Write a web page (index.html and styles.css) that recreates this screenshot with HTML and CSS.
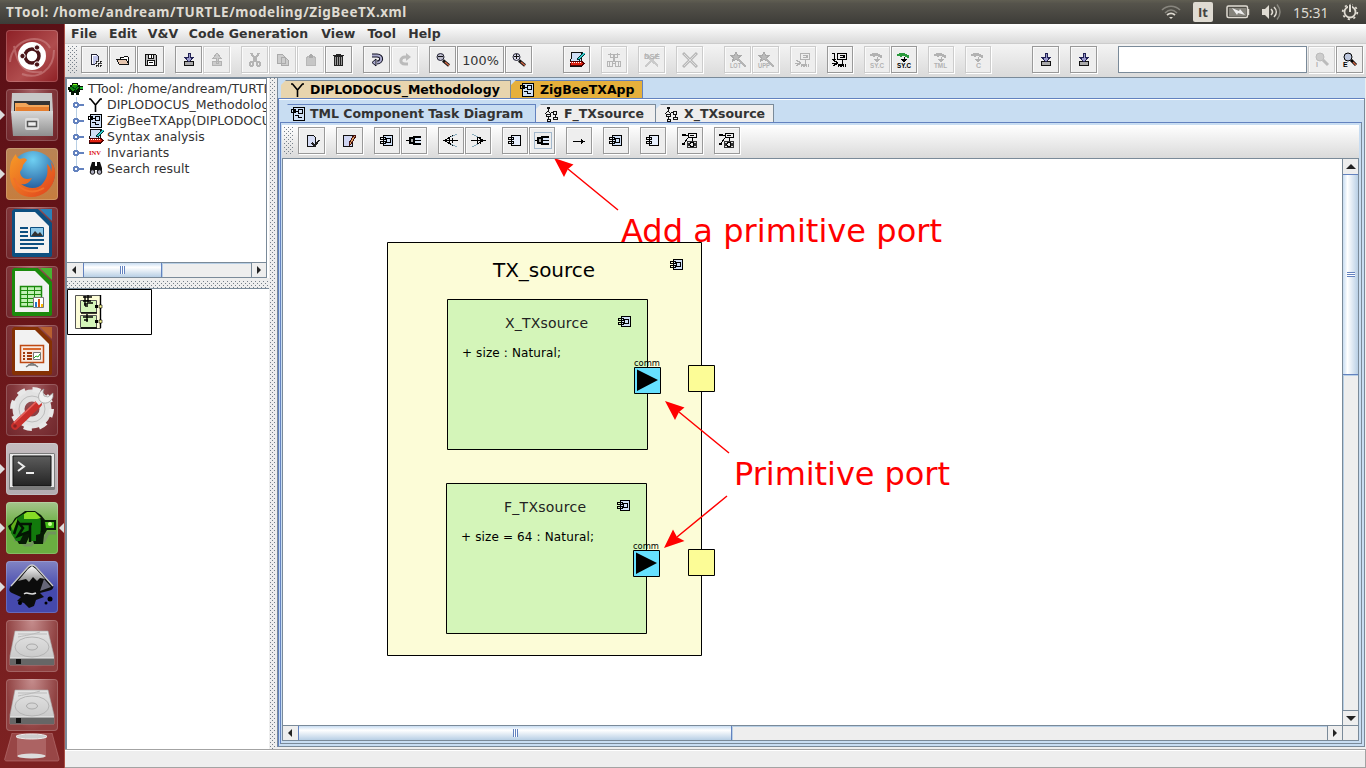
FILE: index.html
```html
<!DOCTYPE html>
<html lang="en">
<head>
<meta charset="utf-8">
<title>TTool</title>
<link rel="stylesheet" href="styles.css">
</head>
<body>
<svg class="defs" width="0" height="0">
<defs>
<linearGradient id="steel" x1="0" y1="0" x2="0" y2="1"><stop offset="0" stop-color="#d8d8d8"/><stop offset="1" stop-color="#8f8f8f"/></linearGradient>
<linearGradient id="disk" x1="0" y1="0" x2="0" y2="1"><stop offset="0" stop-color="#e4e4e4"/><stop offset="1" stop-color="#c3c3c3"/></linearGradient>
<linearGradient id="term" x1="0" y1="0" x2="0" y2="1"><stop offset="0" stop-color="#5c5c5c"/><stop offset="1" stop-color="#242424"/></linearGradient>
<linearGradient id="fox" x1="0" y1="0" x2="1" y2="1"><stop offset="0" stop-color="#f79b27"/><stop offset="1" stop-color="#df401d"/></linearGradient>
<radialGradient id="globe" cx=".5" cy=".2" r=".8"><stop offset="0" stop-color="#6fd0f2"/><stop offset="1" stop-color="#17478e"/></radialGradient>
<linearGradient id="ink" x1="0" y1="0" x2="0" y2="1"><stop offset="0" stop-color="#fff"/><stop offset="1" stop-color="#888"/></linearGradient>
<symbol id="new" viewBox="0 0 16 16"><path d="M4.500 2.500h5l2 2v8h-7z" fill="#bfc4ea" stroke="#223"/><path d="M5.500 12V3.500H9" fill="none" stroke="#fff"/><path d="M11.500 8v8M8 11.500h8" stroke="#eee" stroke-width="3"/><path d="M11.500 8v2M11.500 13v2M8 11.500h2M13 11.500h2M9 9h1v1H9zM13 9h1v1h-1zM9 13h1v1H9zM13 13h1v1h-1zM11 11h1v1h-1z" stroke="#111" stroke-width=".8"/></symbol>
<symbol id="open" viewBox="0 0 16 16"><path d="M5.500 7V5.500h3l1-1h3l1 1v7h-1" fill="#fff" stroke="#111"/><path d="M1.500 7.500h10l2 5h-9z" fill="#e5c5ae" stroke="#111"/></symbol>
<symbol id="save" viewBox="0 0 16 16"><path d="M2.500 2.500h10l1 1v10h-11z" fill="#bbb" stroke="#111"/><path d="M5.500 2.500h5v4h-5zM4.500 8.500h7v5h-7z" fill="#fff" stroke="#111"/><path d="M8.500 3v3M6 10.500h4" stroke="#111"/></symbol>
<symbol id="import" viewBox="0 0 16 16"><path d="M3.500 9.500h9v4h-9z" fill="#aaa" stroke="#111"/><path d="M7 1.500h2v4h3L8 10 4 5.500h3z" fill="#99c" stroke="#225"/></symbol>
<symbol id="export" viewBox="0 0 16 16"><path d="M3.500 9.500h9v4h-9zM7 11V6H4l4-5 4 5H9v5z" fill="#ccc" stroke="#b2b2b2"/></symbol>
<symbol id="cut" viewBox="0 0 16 16"><path d="M4 1l6 9M12 1L6 10" stroke="#b4b4b4" stroke-width="2"/><circle cx="4.500" cy="12" r="2" fill="none" stroke="#b4b4b4" stroke-width="2"/><circle cx="11.500" cy="12" r="2" fill="none" stroke="#b4b4b4" stroke-width="2"/></symbol>
<symbol id="copy" viewBox="0 0 16 16"><path d="M2.500 2.500h5l3 3v6h-8zM6.500 5.500h4l3 3v5h-7z" fill="#ccc" stroke="#aaa"/></symbol>
<symbol id="paste" viewBox="0 0 16 16"><path d="M3.500 5.500l2-1h5l2 1v8h-9z" fill="#c6c6c6" stroke="#b8b8b8"/><path d="M6 4l2-3 2 3v2H6z" fill="#aaa"/></symbol>
<symbol id="trash" viewBox="0 0 16 16"><path d="M3.500 4.500h8v9h-8z" fill="#999" stroke="#222"/><path d="M2 3.500h11M5 2.500h5M5.500 5v9M7.500 5v9M9.500 5v9" stroke="#222"/></symbol>
<symbol id="undo" viewBox="0 0 16 16"><path d="M3 3.500h5c6 0 5 7 0 7" fill="none" stroke="#112" stroke-width="4"/><path d="M3 3.500h5c6 0 5 7 0 7" fill="none" stroke="#aac" stroke-width="2"/><path d="M3 10.500l4-3.500v7z" fill="#aac" stroke="#112"/></symbol>
<symbol id="redo" viewBox="0 0 16 16"><path d="M11 12H8C2 12 3 5 8 5h2" fill="none" stroke="#bbb" stroke-width="3"/><path d="M9 1l5 4-5 4z" fill="#bbb"/></symbol>
<symbol id="zout" viewBox="0 0 16 16"><path d="M8 8.500l6 5" stroke="#111" stroke-width="3"/><path d="M10 10l4 3.500" stroke="#c64" stroke-width="1.500"/><circle cx="5.500" cy="5" r="3.500" fill="#bbc" stroke="#223"/><path d="M3 4.500h5" stroke="#111"/></symbol>
<symbol id="zin" viewBox="0 0 16 16"><path d="M8 8.500l6 5" stroke="#111" stroke-width="3"/><path d="M10 10l4 3.500" stroke="#c64" stroke-width="1.500"/><circle cx="5.500" cy="5" r="3.500" fill="#dde" stroke="#223"/><path d="M3 4.500h5M5.500 2v5" stroke="#111"/></symbol>
<symbol id="syntax" viewBox="0 0 16 16"><path d="M2.500.500h10v14h-11z" fill="#cfdff5" stroke="#111"/><path d="M1 9.500h12l2 2-2 2H1z" fill="#d21" stroke="#500"/><path d="M1 10.500h12" stroke="#fff" stroke-dasharray="1 1"/><path d="M9 8l6-7" stroke="#033" stroke-width="3"/><path d="M10 7l5-6" stroke="#3cc" stroke-width="1.500"/></symbol>
<symbol id="model" viewBox="0 0 16 16"><path d="M2 2.500h12M4.500 1v5M11.500 1v5M4 5.500h8M8 2v8M1.500 9.500h5v5h-5zM9.500 9.500h5v5h-5zM6 11.500h4M3.500 10v4M12.500 10v4" fill="none" stroke="#b5b5b5" stroke-width="1.500"/></symbol>
<symbol id="cross" viewBox="0 0 16 16"><path d="M1 1l14 14M15 1L1 15" stroke="#b8b8b8" stroke-width="3"/><path d="M2 2l12 12M14 2L2 14" stroke="#dedede"/></symbol>
<symbol id="dse" viewBox="0 0 16 16"><path d="M1 2l13 12M14 2L1 15" stroke="#cacaca" stroke-width="2.500"/><text x="0" y="7" font-size="8" textLength="16" lengthAdjust="spacingAndGlyphs" class="px gray">DSE</text></symbol>
<symbol id="wand" viewBox="0 0 16 16"><path d="M6 0l1.500 3.500H11L8.500 6l1 3L6 7.500 2.500 9l1-3L1 3.500h3.500z" fill="#bbb" stroke="#aaa"/><path d="M8 7l8 8" stroke="#b4b4b4" stroke-width="2"/></symbol>
<symbol id="sim" viewBox="0 0 16 16"><path d="M5.500 1.500h9v6h-9zM8 3.500h4v2H8M10.500 8v5M1 8l5 3-5 3M0 11.500h6M6.500 15v-2h2v2M9.500 15v-2h2v2M13.500 15v-3" fill="none" stroke="currentColor" stroke-width="1.300"/></symbol>
<symbol id="code" viewBox="0 0 16 16"><path d="M1 4V2h2V1h6v1h2v1h2v3h-2V5H9V4H6v1H4V4z" fill="currentColor"/></symbol>
<symbol id="down" viewBox="0 0 16 16"><path d="M8 5v3M5.500 7.500h5L8 9.500z" fill="currentColor" stroke="currentColor"/></symbol>
<symbol id="turtle" viewBox="0 0 16 16"><path d="M0 6h2V4h2V2h6v2h2v1h3v4h-3v2h-1v3H8v-2H6v2H3v-3H1z" fill="#021402"/><path d="M2 6h2V4h6l1 3-3 2-4 1-2-2z" fill="#148a10"/><path d="M5 3h4v1H5z" fill="#8f2"/><path d="M12 6h3v2h-3z" fill="#2b3"/><path d="M4 6l3 2 3-3M7 8v3" stroke="#041" fill="none"/></symbol>
<symbol id="y" viewBox="0 0 16 16"><path d="M1 2h1.500L7.500 8l5-6H14M7.500 8v7" fill="none" stroke="#000" stroke-width="1.600"/></symbol>
<symbol id="design" viewBox="0 0 16 16"><path d="M2.500 1.500h11v13h-11z" fill="#cfe0f5" stroke="#000" stroke-width="1.400"/><path d="M7.500 3.500h4v4h-4zM0 3.500h3v3H0zM3 5.500h4M4.500 3v4M4 9.500h3v2h4" fill="none" stroke="#000"/></symbol>
<symbol id="act" viewBox="0 0 16 16"><path d="M3 1h3v2H3z" fill="#111"/><path d="M4.500 3v3M1 8l3-3 3 3M2.500 8.500h4v2h-4zM4.500 10v3M3 13h3v2H3zM7 6.500h3M9.500 5.500h3v3h-3zM11 9v2M9.500 11.500h4v2h-4z" fill="none" stroke="#111"/></symbol>
<symbol id="comp" viewBox="0 0 16 16"><path d="M4.500 2.500h9v10h-9z" fill="#cfdff5" stroke="#000"/><path d="M7.500 5.500h4v4h-4zM1.500 4.500h5v2h-5zM1.500 8.500h5v2h-5z" fill="none" stroke="#000"/></symbol>
<symbol id="prim" viewBox="0 0 16 16"><path d="M4.500 2.500h9v10h-9z" fill="#e6eefc" stroke="#000"/><path d="M1.500 4.500h5v2h-5zM1.500 8.500h5v2h-5z" fill="none" stroke="#000"/></symbol>
<symbol id="port" viewBox="0 0 16 16"><path d="M7 4h8v7H7z" fill="#dce8fa"/><path d="M7 4h8M7 11h8" stroke="#000" stroke-width="2"/><path d="M0 7.500h4M9 7.500h6" stroke="#000"/><path d="M4 5h4v5H4z" fill="#aaa" stroke="#000" stroke-width="2"/></symbol>
<symbol id="fork" viewBox="0 0 16 16"><path d="M0 7.500h15M2 7l9-5M2 8l9 5M6.500 4v7M9.500 5v5" fill="none" stroke="#000"/><path d="M14 1l-6 3M14 14l-6-3" stroke="#8ab"/></symbol>
<symbol id="join" viewBox="0 0 16 16"><path d="M1 7.500h15M13 7L4 2M13 8l-9 5M10.500 4v7M7.500 5v5" fill="none" stroke="#000"/><path d="M2 1l6 3M2 14l6-3" stroke="#8ab"/></symbol>
<symbol id="arrow" viewBox="0 0 16 16"><path d="M2 8.500h11" stroke="#000"/><path d="M10 6l4 2.500-4 2.500z"/></symbol>
<symbol id="cam" viewBox="0 0 16 16"><path d="M0 1h4v2H0zM0 10h3v2H0z"/><path d="M6.500.500h8v4h-8zM8 2.500h4M3 2.500h3M2 10l4-5M10.500 5v4" fill="none" stroke="#000"/><path d="M5 8h10v7H5z" fill="#333"/><circle cx="10" cy="11.500" r="2" fill="#eee" stroke="#000"/><path d="M6 9h2v1H6zM12 9h2v1h-2zM6 13h2v1H6zM12 13h2v1h-2z" fill="#ddd"/></symbol>
<symbol id="page" viewBox="0 0 16 16"><path d="M3.500 2.500h6l2 2v9h-8z" fill="#d5dcf5" stroke="#111"/><path d="M8 10l3 3 4-6" fill="none" stroke="#222" stroke-width="1.500"/></symbol>
<symbol id="note" viewBox="0 0 16 16"><path d="M1.500 2.500h9v11h-9z" fill="#cfd5f2" stroke="#111"/><path d="M7 10l5-8 2 1-5 8-2 2z" fill="#e0a060" stroke="#411"/></symbol>
<symbol id="find" viewBox="0 0 16 16"><path d="M9 8l5 5" stroke="currentColor" stroke-width="3"/><circle cx="6" cy="5" r="4" fill="#bcc6dd" stroke="currentColor"/></symbol>
<symbol id="findoff" viewBox="0 0 16 16"><path d="M9 8l5 5" stroke="#bbb" stroke-width="3"/><circle cx="6" cy="5" r="4" fill="#ccc" stroke="#bbb"/></symbol>
<symbol id="glasses" viewBox="0 0 16 16"><path d="M4 1h3v4h2V1h3l2 6v5H9V9H7v3H2V7z" fill="#111"/><circle cx="4.500" cy="11" r="2.300" fill="#aab" stroke="#111"/><circle cx="11.500" cy="11" r="2.300" fill="#aab" stroke="#111"/></symbol>
<symbol id="hdd" viewBox="0 0 52 52"><path d="M9 11h33l6 25v9H4v-9z" fill="url(#disk)" stroke="#aaa" stroke-width=".6"/><path d="M4 38h44v7H4z" fill="#666"/><path d="M10 39h5v5h-5z" fill="#111"/><path d="M4 38h44" stroke="#eee"/><ellipse cx="26" cy="27" rx="17" ry="10" fill="none" stroke="#b4b4b4"/><ellipse cx="26" cy="27" rx="5.500" ry="3" fill="none" stroke="#aaa"/><path d="M12 14h29M12 17c10-2 12-2 22-5" fill="none" stroke="#bbb"/></symbol>
</defs>
</svg>

<header class="panel">
  <div class="panel-title">TTool: /home/andream/TURTLE/modeling/ZigBeeTX.xml</div>
  <div class="indicators">
    <svg width="20" height="16" viewBox="0 0 20 16"><path d="M1 6c5-5 13-5 18 0M4 9c4-4 8-4 12 0" fill="none" stroke="#88867e" stroke-width="1.600"/><path d="M6 11c3-2.500 5-2.500 8 0" fill="none" stroke="#dfdbd2" stroke-width="1.800"/><path d="M8 13h4l-2 2z" fill="#dfdbd2"/></svg>
    <span class="kbd">It</span>
    <svg width="24" height="14" viewBox="0 0 24 14"><rect x="1" y="1" width="20.500" height="11.500" rx="1.500" fill="none" stroke="#dfdbd2" stroke-width="1.500"/><path d="M3 3h17v8H3z" fill="#85837b"/><path d="M6 3l7 3 1-2 5 6-7-2-1 2z" fill="#eee"/><path d="M22.500 4v6" stroke="#dfdbd2" stroke-width="1.500"/></svg>
    <svg class="vol" width="20" height="18" viewBox="0 0 20 18"><path d="M1 6h3l4-4v14l-4-4H1z" fill="#dfdbd2"/><path d="M10 6c2 2 2 4 0 6M13 4c3 3 3 7 0 10" fill="none" stroke="#dfdbd2" stroke-width="1.600"/><path d="M16 1.500c4 5 4 10 0 15" fill="none" stroke="#88867e" stroke-width="1.500"/></svg>
    <span class="clock">15:31</span>
    <svg width="18" height="18" viewBox="0 0 18 18"><circle cx="9" cy="9" r="5.500" fill="none" stroke="#dfdbd2" stroke-width="1.800"/><circle cx="9" cy="9" r="7.300" fill="none" stroke="#dfdbd2" stroke-width="1.800" stroke-dasharray="2.200 3.530"/><path d="M9 1v8" stroke="#46453f" stroke-width="4"/><path d="M9 1.500v7.500" stroke="#dfdbd2" stroke-width="2"/></svg>
  </div>
</header>

<div class="desktop">
<nav class="launcher">
  <div class="tile dash"><svg viewBox="0 0 52 52"><path d="M4 32C6 8 36 2 44 18M48 20c0 20-16 30-32 24M8 16c4 22 12 28 28 26" fill="none" stroke="#d08c8c" stroke-opacity=".55" stroke-width="2"/><circle cx="26" cy="26" r="14" fill="#fff"/><circle cx="26" cy="26" r="7" fill="none" stroke="#4a1418" stroke-width="3.500"/><g fill="#4a1418" stroke="#fff"><circle cx="16.500" cy="26" r="2.700"/><circle cx="31" cy="17.500" r="2.700"/><circle cx="31" cy="34.500" r="2.700"/></g></svg></div>
  <div class="tile run"><svg viewBox="0 0 52 52"><path d="M6 4h40l1 20H5z" fill="#c8c8c8"/><path d="M8 12h36v12H8z" fill="#333"/><path d="M9 14h11l3 2h20v6H9z" fill="#f2a65a"/><path d="M10 18h33v4H10z" fill="#e57e2e"/><path d="M5 22h42v25H7z" fill="url(#steel)"/><rect x="19" y="29" width="14" height="12" rx="2" fill="#ddd"/><path d="M21.500 32.500h9v5h-9z" fill="#eee" stroke="#555" stroke-width="1.500"/></svg></div>
  <div class="tile run orange"><svg viewBox="0 0 52 52"><circle cx="27" cy="25" r="22" fill="url(#globe)"/><path d="M5 14c2-4 3-6 5-8 0 3 2 4 4 5 3-1 6-1 7 1l-4 5c0 3-2 5-3 7 1 7 6 8 12 6-3 6-8 7-11 6 8 6 18 5 22-1 5-6 5-12 4-19 3 2 4 5 4 8 1-4 1-8-1-11 4 4 6 9 5 15-2 13-12 21-24 21C10 49 0 35 5 14z" fill="url(#fox)"/><path d="M8 30c4 11 16 18 30 10" fill="none" stroke="#f0702a" stroke-width="2"/></svg></div>
  <div class="tile"><svg viewBox="0 0 52 52"><path d="M8 2h24l14 14v32c0 1-1 2-2 2H8c-1 0-2-1-2-2V4z" fill="#0d4f80"/><path d="M34 2h12v12z" fill="#2c82b8"/><path d="M9 5h20l14 14v27H9z" fill="#f2f2f2"/><path d="M14 21h8M14 25h8M14 29h8M14 33h24M14 37h24M14 41h18" stroke="#0d4f80" stroke-width="2"/><path d="M24.500 20.500h13v9h-13z" fill="#8cc8e8" stroke="#0d4f80"/><path d="M25 29l4-5 3 3 2-2 3 4z" fill="#333"/></svg></div>
  <div class="tile"><svg viewBox="0 0 52 52"><path d="M8 2h24l14 14v32c0 1-1 2-2 2H8c-1 0-2-1-2-2V4z" fill="#1c8a0c"/><path d="M34 2h12v12z" fill="#49b332"/><path d="M9 5h20l14 14v27H9z" fill="#f2f2f2"/><path d="M14.500 20.500h21v20h-21z" fill="#c0f0b4" stroke="#1c8a0c" stroke-width="1.500"/><path d="M21.500 20v20M28.500 20v20M14 24.500h21M14 28.500h21M14 32.500h21M14 36.500h21" stroke="#1c8a0c"/><path d="M27.500 31.500h10v10h-10z" fill="#fff" stroke="#777"/><path d="M29 36h2v5h-2z" fill="#27c"/><path d="M32 33h2v8h-2z" fill="#d51"/><path d="M35 38h2v3h-2z" fill="#fb0"/></svg></div>
  <div class="tile"><svg viewBox="0 0 52 52"><path d="M8 2h24l14 14v32c0 1-1 2-2 2H8c-1 0-2-1-2-2V4z" fill="#853104"/><path d="M34 2h12v12z" fill="#b86030"/><path d="M9 5h20l14 14v27H9z" fill="#f2f2f2"/><path d="M14.500 20.500h23v17h-23z" fill="#f8e8de" stroke="#bf4a14" stroke-width="1.500"/><path d="M17 24h18" stroke="#d9692e" stroke-width="2"/><path d="M17 28h2M17 31h2M17 34h2M21 28h5M21 31h5M21 34h5" stroke="#a03a0c" stroke-width="2"/><path d="M27.500 27.500h7v7h-7z" fill="#fff" stroke="#777"/><path d="M28 33l2-2 2 1 2-3" stroke="#2a2" fill="none"/><path d="M26 38l-6 4M26 38l6 4M22 40h8" stroke="#777" stroke-width="1.500"/></svg></div>
  <div class="tile"><svg viewBox="0 0 52 52"><circle cx="26" cy="25" r="13.500" fill="none" stroke="#e2e2e2" stroke-width="12"/><circle cx="26" cy="25" r="19.500" fill="none" stroke="#e8e8e8" stroke-width="5" stroke-dasharray="8 7.300"/><circle cx="26" cy="25" r="13" fill="none" stroke="#bdbdbd"/><path d="M9 42l23-22" stroke="#c92f2b" stroke-width="7.500" stroke-linecap="round"/><path d="M8 39l23-22" stroke="#e4645e" stroke-width="1.500"/><path d="M31 19l6-5" stroke="#e4e4e4" stroke-width="6"/><path d="M38 5c-5 2-7 8-4 12 4 4 11 2 13-4V9l-5 4-4-1-1-4z" fill="#f0f0f0" stroke="#999" stroke-width=".7"/><circle cx="9" cy="42" r="1.800" fill="#822"/></svg></div>
  <div class="tile run silver"><svg viewBox="0 0 52 52"><rect x="3" y="10" width="46" height="37" rx="1.500" fill="#7b7b7b"/><path d="M4 11h44v33H4z" fill="#e8e8e8"/><path d="M7 13h38v30H7z" fill="url(#term)" stroke="#111"/><path d="M12 19l6 4.500-6 4.500M20 30h8" fill="none" stroke="#eee" stroke-width="2"/></svg></div>
  <div class="tile run active green"><svg viewBox="0 0 52 52"><path d="M8 38h6l5 5h6l3-4h10l4-8h8" stroke="#777" stroke-width="3" fill="none" opacity=".5"/><path d="M2 24l4-3 3-5 6-4 4-3h10l6 4 4 5h11v10h-9l-3 5-1 9h-9l-2-7h-3l-3 7h-7l-5-9-5-6z" fill="#071b05"/><path d="M5 25l6-9 6-4h12l8 8-3 12-4 1v6h-5l-2-9-6 3-3 6h-4l-5-8z" fill="#127a0c"/><path d="M5 24l6-8v4l-4 9z" fill="#62ae1b"/><path d="M18 12l3-2h8l6 6-4 1H18z" fill="#86dc25"/><path d="M8 32l4-12 5 6-5 8 13-5M24 22v18M14 22h12M36 18v12" fill="none" stroke="#031503" stroke-width="2.500"/><path d="M39 20h9v6h-8z" fill="#41bb16"/><circle cx="44" cy="22" r="2" fill="#cfff9a"/></svg></div>
  <div class="tile run blue"><svg viewBox="0 0 52 52"><path d="M26 4c2 0 4 1 5 3l15 16c3 3 1 6-4 7l-8 2 4 4-8 3-2 6-5 2-5-5-7-2 4-4-9-4c-4-2-3-5 0-8L21 7c1-2 3-3 5-3z" fill="#0c0c0c"/><path d="M22 8l4-3 4 3 9 10-5-1-3 3-4-4-4 5-3-3-8 2z" fill="url(#ink)"/><path d="M5 25L22 6q4-4 8 0l17 19" fill="none" stroke="#ccc" stroke-width="1.300"/><path d="M18 33c4-3 6 2 12-1" stroke="#ddd" stroke-width="1.500" fill="none"/><path d="M38 18l7 8-11 4z" fill="#667"/><circle cx="14" cy="42" r="2"/><circle cx="44" cy="38" r="2.500"/><circle cx="40" cy="42" r="1.500"/></svg></div>
  <div class="tile light"><svg viewBox="0 0 52 52"><use href="#hdd"/></svg></div>
  <div class="tile light"><svg viewBox="0 0 52 52"><use href="#hdd"/></svg></div>
  <svg class="bin" viewBox="0 0 56 29"><path d="M8 0h40l7 26c0 2-1 2-2 2H3c-2 0-3-1-2-3z" fill="#a85a5a" fill-opacity=".65" stroke="#bb7777" stroke-opacity=".6"/><path d="M13 4h29v20H13z" fill="#c08080" fill-opacity=".5"/><ellipse cx="27.500" cy="3.500" rx="15.500" ry="2.500" fill="#ccc" stroke="#eee"/><ellipse cx="27.500" cy="23" rx="14" ry="2.500" fill="#ddd"/></svg>
</nav>

<div class="app">
<div class="menubar"><span>File</span><span>Edit</span><span class="vv">V&amp;V</span><span class="cg">Code Generation</span><span>View</span><span>Tool</span><span>Help</span></div>
<div class="toolbar main-tools">
  <i class="grip"></i>
  <div class="grp first"><b class="btn"><svg><use href="#new"/></svg></b><b class="btn"><svg><use href="#open"/></svg></b><b class="btn"><svg><use href="#save"/></svg></b></div>
  <div class="grp"><b class="btn"><svg><use href="#import"/></svg></b><b class="btn off"><svg><use href="#export"/></svg></b></div>
  <div class="grp"><b class="btn off"><svg><use href="#cut"/></svg></b><b class="btn off"><svg><use href="#copy"/></svg></b><b class="btn off"><svg><use href="#paste"/></svg></b><b class="btn"><svg><use href="#trash"/></svg></b></div>
  <div class="grp"><b class="btn"><svg class="soft"><use href="#undo"/></svg></b><b class="btn off"><svg class="soft"><use href="#redo"/></svg></b></div>
  <div class="grp"><b class="btn"><svg class="soft"><use href="#zout"/></svg></b><b class="btn pct">100%</b><b class="btn"><svg class="soft"><use href="#zin"/></svg></b></div>
  <div class="grp wide"><b class="btn"><svg><use href="#syntax"/></svg></b></div>
  <div class="grp"><b class="btn off n"><svg><use href="#model"/></svg></b></div>
  <div class="grp"><b class="btn off"><svg><use href="#dse"/></svg></b></div>
  <div class="grp"><b class="btn off"><svg class="soft"><use href="#cross"/></svg></b></div>
  <div class="grp mid"><b class="btn off"><svg class="gray"><use href="#wand"/><text x="0" y="16" textLength="11" lengthAdjust="spacingAndGlyphs" class="px">LOT</text></svg></b><b class="btn off"><svg class="gray"><use href="#wand"/><text x="0" y="16" textLength="12" lengthAdjust="spacingAndGlyphs" class="px">UPP</text></svg></b></div>
  <div class="grp"><b class="btn off n"><svg class="gray"><use href="#sim"/></svg></b></div>
  <div class="grp"><b class="btn n"><svg><use href="#sim"/><path d="M0 1.500h2v6M0 7.500h4" fill="none" stroke="#000"/></svg></b></div>
  <div class="grp"><b class="btn off n"><svg class="gray"><use href="#code"/><use href="#down"/><text x="1" y="16" textLength="14" lengthAdjust="spacingAndGlyphs" class="px">SY.C</text></svg></b><b class="btn n"><svg><use class="leaf" href="#code"/><use href="#down"/><text x="1" y="16" textLength="14" lengthAdjust="spacingAndGlyphs" class="px">SY.C</text></svg></b></div>
  <div class="grp"><b class="btn off n"><svg class="gray"><use href="#code"/><use href="#down"/><text x="1" y="16" textLength="13" lengthAdjust="spacingAndGlyphs" class="px">TML</text></svg></b></div>
  <div class="grp"><b class="btn off n"><svg class="gray"><use href="#code"/><use href="#down"/><text x="6" y="16" class="px">C</text></svg></b></div>
  <div class="grp far"><b class="btn"><svg><use href="#import"/></svg></b></div>
  <div class="grp"><b class="btn"><svg><use href="#import"/></svg></b></div>
  <div class="grp search"><i class="field"></i><b class="btn off"><svg class="gray soft"><use href="#findoff"/><text x="2" y="15" class="px">I</text></svg></b><b class="btn"><svg class="soft"><use href="#find"/><path d="M11 10l3 3" stroke="#c64" stroke-width="1.500"/><text x="1" y="15" class="px">E</text></svg></b></div>
</div>

<div class="work">
  <aside class="side">
    <div class="tree">
      <div class="row root"><svg><use href="#turtle"/></svg><span>TTool: /home/andream/TURTL</span></div>
      <div class="row"><i class="knob"></i><svg class="soft"><use href="#y"/></svg><span>DIPLODOCUS_Methodolog</span></div>
      <div class="row"><i class="knob"></i><svg><use href="#design"/></svg><span>ZigBeeTXApp(DIPLODOCU</span></div>
      <div class="row"><i class="knob"></i><svg><use href="#syntax"/></svg><span>Syntax analysis</span></div>
      <div class="row"><i class="knob"></i><svg><text x="1" y="10" textLength="12" lengthAdjust="spacingAndGlyphs" class="inv">INV</text></svg><span>Invariants</span></div>
      <div class="row"><i class="knob"></i><svg class="soft"><use href="#glasses"/></svg><span>Search result</span></div>
    </div>
    <div class="hbar"><i class="end left"></i><i class="thumb small"></i><i class="track"></i><i class="end right"></i></div>
    <div class="hsplit"></div>
    <svg class="mini" viewBox="0 0 85 46"><path d="M.500.500h84v45H.500z" fill="#fff" stroke="#000"/><path d="M8.500 6.500h25v33h-25z" fill="#fcfcd7" stroke="#555"/><path d="M13.500 11.500h16v12h-16zM13.500 26.500h16v12h-16z" fill="#d4f5b9" stroke="#555"/><path d="M16 8h9M21 6v9M16 12h8M17 15h4M18 17h3M22 14h4M16 28h10M20 25v8M17 31h4M14 24h16M14 39h16M33.500 6v33M18 7v10" stroke="#000" stroke-width="1.400"/><path d="M28 16h3v3h-3zM28 31h3v3h-3z"/><path d="M32 16h3v3h-3zM32 31h3v3h-3z" fill="#fcfc96" stroke="#000" stroke-width=".6"/></svg>
  </aside>
  <div class="vsplit"></div>
  <main class="outer">
    <div class="tabs top"><div class="tab tan t1"><svg class="soft"><use href="#y"/></svg>DIPLODOCUS_Methodology</div><div class="tab gold t2"><svg><use href="#design"/></svg>ZigBeeTXApp</div></div>
    <div class="outer-body">
      <div class="tabs sub"><div class="tab sel s1"><svg><use href="#design"/></svg>TML Component Task Diagram</div><div class="tab s2"><svg><use href="#act"/></svg>F_TXsource</div><div class="tab s3"><svg><use href="#act"/></svg>X_TXsource</div></div>
      <div class="inner-body">
        <div class="toolbar draw-tools">
          <i class="grip"></i>
          <div class="grp first"><b class="btn"><svg><use href="#page"/></svg></b></div>
          <div class="grp"><b class="btn"><svg><use href="#note"/></svg></b></div>
          <div class="grp"><b class="btn n"><svg><use href="#comp"/></svg></b><b class="btn n"><svg><use href="#port"/></svg></b></div>
          <div class="grp"><b class="btn n"><svg><use href="#fork"/></svg></b><b class="btn n"><svg><use href="#join"/></svg></b></div>
          <div class="grp"><b class="btn n"><svg><use href="#prim"/></svg></b><b class="btn n focus"><svg><use href="#port"/></svg></b></div>
          <div class="grp"><b class="btn n"><svg><use href="#arrow"/></svg></b></div>
          <div class="grp"><b class="btn n"><svg><use href="#comp"/></svg></b></div>
          <div class="grp"><b class="btn n"><svg><use href="#prim"/></svg></b></div>
          <div class="grp"><b class="btn n"><svg><use href="#cam"/></svg></b></div>
          <div class="grp"><b class="btn n"><svg><use href="#cam"/></svg></b></div>
        </div>
        <div class="pane">
          <div class="view">
            <svg class="diagram" viewBox="283 159 1059 566">
              <path d="M387.500 242.500h314v413h-314z" fill="#fcfcd7" stroke="#000"/>
              <path d="M447.500 299.500h200v150h-200zM446.500 483.500h200v150h-200z" fill="#d4f5b9" stroke="#000"/>
              <text x="493" y="277" font-size="20" textLength="102">TX_source</text>
              <text x="505" y="328" font-size="14" textLength="83" class="thin">X_TXsource</text>
              <text x="504" y="512" font-size="14" textLength="82" class="thin">F_TXsource</text>
              <text x="462" y="357" font-size="12" textLength="99">+ size : Natural;</text>
              <text x="461" y="541" font-size="12" textLength="133">+ size = 64 : Natural;</text>
              <g shape-rendering="crispEdges">
              <use href="#comp" x="669" y="257" width="16" height="16"/>
              <use href="#comp" x="617" y="314" width="16" height="16"/>
              <use href="#comp" x="616" y="498" width="16" height="16"/>
              </g>
              <path d="M634.500 367.500h26v26h-26zM633.500 550.500h26v26h-26z" fill="#66e0ff" stroke="#000"/>
              <path d="M637 369.500l21 10.500-21 11zM636 552.500l21 10.500-21 11z"/>
              <path d="M688.500 365.500h26v26h-26zM688.500 549.500h26v26h-26z" fill="#fcfc96" stroke="#000"/>
              <text x="634" y="366" font-size="8" textLength="26" lengthAdjust="spacingAndGlyphs">comm</text>
              <text x="633" y="549" font-size="8" textLength="26" lengthAdjust="spacingAndGlyphs">comm</text>
              <g fill="red" stroke="none">
                <text x="621" y="242" font-size="32" textLength="321">Add a primitive port</text>
                <text x="734" y="485" font-size="32" textLength="216">Primitive port</text>
                <path d="M554 158l19.500 6.500-5.500 4.500-4 8zM665 401l19.500 6.500-5.500 4.500-4 8zM664 548l9-18.500 4 7.500 7.500 4z"/>
              </g>
              <path d="M568 169l50 41M679 412l50 41M677 537l50-41" stroke="red" stroke-width="1.500"/>
            </svg>
            <div class="vbar"><i class="end up"></i><i class="thumb tall"></i><i class="track"></i><i class="end dn"></i></div>
          </div>
          <div class="hbar big"><i class="end left"></i><i class="thumb long"></i><i class="track"></i><i class="end right"></i><i class="corner"></i></div>
        </div>
      </div>
    </div>
  </main>
</div>
<footer class="status"></footer>
</div>
</div>
</body>
</html>
```
FILE: styles.css
```css
* { box-sizing: border-box; }
body { margin: 0; width: 1366px; height: 768px; overflow: hidden; background: #eee; color: #333; font: 12.5px "DejaVu Sans", sans-serif; display: flex; flex-direction: column; }
i { display: block; flex: none; font-style: normal; }
svg { display: block; flex: none; }
.defs { position: absolute; }
.panel { height: 24px; flex: none; display: flex; justify-content: space-between; align-items: center; padding: 0 7px 0 6px; background: linear-gradient(#605e52, #55534b 15%, #3d3c38); color: #dfdbd2; }
.panel-title { font: bold 13.5px "Noto Sans", sans-serif; letter-spacing: .54px; white-space: nowrap; }
.indicators { display: flex; align-items: center; }
.kbd { width: 20px; height: 20px; margin: 0 13px 0 12px; border-radius: 2px; background: #dfdbd2; color: #45443f; font: bold 13px/20px "Open Sans", sans-serif; text-align: center; }
.vol { margin: 0 12px 0 11px; }
.clock { width: 36px; margin-right: 12px; font: 14px "Noto Sans", sans-serif; white-space: nowrap; letter-spacing: -.1px; }
.desktop { flex: 1; display: flex; min-height: 0; }

.launcher { width: 65px; flex: none; display: flex; flex-direction: column; gap: 7px; padding: 6px 0 0 6px; overflow: hidden; background: linear-gradient(#5b1016, #651418 30%, #7d2222); border-right: 1px solid #a94f46; }
.tile { position: relative; width: 52px; height: 52px; flex: none; border-radius: 4px; background: radial-gradient(ellipse at 50% 0, #a56367, #83383c 50%, #6f262b); box-shadow: inset 0 0 0 1px rgba(255,255,255,.18); }
.tile svg { width: 52px; height: 52px; }
.dash { background: linear-gradient(135deg, #8d2026, #b04d4e 60%, #8e1f24); }
.orange { background: linear-gradient(#b98455, #c67d3e); }
.silver { background: linear-gradient(#c4bcbf, #b3acb0); }
.green { background: linear-gradient(#a5c68c, #6aae41 45%); }
.blue { background: linear-gradient(#8284c3, #4549ad 55%); }
.light { background: radial-gradient(ellipse at 50% 0, #c58d8d, #8f4141 70%); }
.run::before { content: ""; position: absolute; left: -6px; top: 21px; border: 5px solid transparent; border-left-color: #ddd; border-right: 0; }
.active::after { content: ""; position: absolute; right: -6px; top: 21px; border: 5px solid transparent; border-right-color: #ddd; border-left: 0; }
.bin { width: 56px; height: 29px; margin: -5px 0 0 -2px; }

.app { flex: 1; min-width: 0; display: flex; flex-direction: column; }
.menubar { height: 20px; flex: none; display: flex; gap: 12px; padding: 2px 0 0 6px; line-height: 16px; font-weight: bold; background: linear-gradient(#fff, #dadada); border-bottom: 1px solid #ccc; letter-spacing: .1px; }
.vv { margin: 0 -1.5px 0 -1.5px; }
.cg { margin-right: 1px; }
.toolbar { display: flex; background: linear-gradient(#f4f4f4, #dadada); }
.main-tools { height: 34px; flex: none; padding: 2px 0 0 3px; border-bottom: 1px solid #7a8a99; }
.grip, .hsplit, .vsplit { background-color: #eee; background-image: conic-gradient(at 1px 1px, transparent 75%, #76808a 0), conic-gradient(at 1px 1px, transparent 75%, #76808a 0); background-size: 4px 4px; background-position: 0 0, 2px 2px; }
.grip { width: 9px; height: 28px; background-color: transparent; }
.grp { display: flex; flex: none; gap: 1px; margin-left: 11px; }
.grp.first { margin-left: 4px; }
.grp.wide { margin-left: 31px; }
.grp.mid { margin-left: 21px; }
.grp.far { margin-left: 41px; }
.grp.search { margin-left: 21px; }
.btn { width: 27px; height: 27px; padding: 5px 0 0 5px; border: 1px solid #999; background: #eee; box-shadow: 1px 1px 0 #fff, inset 1px 1px 0 #fafafa; color: #000; }
.btn.n { width: 26px; padding-left: 4px; }
.btn svg, .row svg, .tab svg { width: 16px; height: 16px; flex: none; overflow: visible; shape-rendering: crispEdges; }
.btn svg.soft, .row svg.soft, .tab svg.soft { shape-rendering: auto; }
.btn.off { border-color: #ccc; }
.gray { color: #b2b2b2; fill: #aaa; }
.leaf { color: #2a9a3c; }
.px { font: bold 7px "Liberation Sans", sans-serif; fill: currentColor; }
.btn.pct { width: 47px; padding: 0; font: 12.8px/27px "DejaVu Sans", sans-serif; color: #333; text-align: center; }
.field { width: 189px; height: 27px; background: #fff; border: 1px solid #7a8a99; }

.work { flex: 1; min-height: 0; display: flex; }
.side { width: 204px; flex: none; display: flex; flex-direction: column; background: #fff; border-left: 2px solid #7a8a99; }
.tree { width: 200px; height: 184px; padding-top: 2px; overflow: hidden; border-top: 1px solid #7a8a99; border-right: 1px solid #7a8a99; background: linear-gradient(#b8cfe5, #b8cfe5) 9px 18px / 1px 72px no-repeat; }
.row { height: 16px; display: flex; align-items: center; gap: 4px; padding-left: 6px; line-height: 16px; white-space: nowrap; }
.row span { margin-left: -1px; }
.row.root { padding-left: 1px; }
.row.root span { margin-left: 0; letter-spacing: -.02px; }
.knob { width: 11px; height: 6px; background: radial-gradient(circle at 3px 3px, #fff 1px, #6382bf 1.500px 3px, transparent 3.300px), linear-gradient(#6382bf, #6382bf) 5px 2px / 6px 2px no-repeat; }
.inv { font: bold 7px "Liberation Serif", serif; fill: #d11; }
.hbar { height: 16px; flex: none; display: flex; border-top: 1px solid #7a8a99; border-bottom: 1px solid #7a8a99; background: #eee; }
.side .hbar { width: 200px; border-right: 1px solid #7a8a99; }
.end { width: 15px; background: #eee; position: relative; }
.end::after { content: ""; position: absolute; left: 5px; top: 3px; border: 4px solid transparent; }
.left::after { border-right-color: #222; border-left: 0; }
.side .left { width: 16px; }
.right { width: 15px; border-left: 1px solid #7a8a99; }
.right::after { border-left-color: #222; border-right: 0; }
.up, .dn { height: 15px; }
.up::after { left: 3px; border: 5px solid transparent; border-bottom-color: #222; border-top: 0; top: 5px; }
.dn { border-top: 1px solid #7a8a99; }
.dn::after { left: 3px; border: 5px solid transparent; border-top-color: #222; border-bottom: 0; top: 5px; }
.track { flex: 1; box-shadow: inset 1px 1px 0 #b8cfe5; }
.thumb { border: 1px solid #6382bf; border-width: 0 1px; background: repeating-linear-gradient(90deg, #6382bf 0 1px, #fff 1px 2px) center / 5px 8px no-repeat, linear-gradient(#c8ddf2, #fff 30%, #b8cfe5); }
.small { width: 79px; }
.hsplit { height: 11px; flex: none; border-top: 3px solid #eee; border-bottom: 1px solid #7a8a99; }
.mini { width: 85px; height: 46px; }
.vsplit { width: 8px; flex: none; border-left: 1px solid #eee; border-right: 1px solid #eee; }
.outer { width: 1088px; flex: none; display: flex; flex-direction: column; background: #c8ddf2; border-left: 1px solid #7a8a99; padding-top: 2px; margin-bottom: 2px; }
.tabs { display: flex; height: 18px; flex: none; font-weight: bold; line-height: 18px; white-space: nowrap; }
.top { padding-left: 3px; color: #000; }
.tab { display: flex; align-items: center; border: 1px solid #7a8a99; border-left: 0; border-bottom: 0; background: #eee; clip-path: polygon(0 5px, 5px 0, 100% 0, 100% 100%, 0 100%); }
.tab svg { margin: 0 4px 0 9px; }
.sub .tab svg { margin-left: 8px; }
.sub .s1 svg { margin: 0 3px 0 8px; }
.t1 { width: 230px; } .t2 { width: 132px; }
.tan { background: #e8d5ae; }
.gold { background: #e6b03b; border-color: #6382bf; }
.outer-body { flex: 1; display: flex; flex-direction: column; padding: 5px 2px 2px 1px; border: 1px solid #7a8a99; border-top-color: #6382bf; border-left-color: #6382bf; box-shadow: inset 0 1px 0 #fff; }
.sub { padding-left: 3px; }
.s1 { width: 253px; background: #c8ddf2; border-color: #6382bf; } .s2 { width: 120px; } .s3 { width: 118px; }
.inner-body { flex: 1; display: flex; flex-direction: column; border: 1px solid #7a8a99; border-top-color: #6382bf; border-left-color: #6382bf; padding: 2px 2px 2px 1px; }
.draw-tools { height: 33px; flex: none; padding: 2px 0 0 2px; background: linear-gradient(#fff, #dadada); }
.draw-tools .grip { width: 10px; }
.focus { position: relative; }
.focus::after { content: ""; position: absolute; inset: 4px 2px 4px 4px; border: 1px solid #a3b8cc; }
.pane { flex: 1; display: flex; flex-direction: column; border: 1px solid #7a8a99; border-bottom: 0; }
.view { flex: 1; display: flex; background: #fff; min-height: 0; }
.diagram { width: 1059px; height: 566px; overflow: hidden; }
.diagram text { font-family: "DejaVu Sans", sans-serif; }
.thin { fill: #222; }
.vbar { flex: 1; display: flex; flex-direction: column; border-left: 1px solid #7a8a99; background: #eee; }
.tall { height: 201px; border-width: 1px 0; background: repeating-linear-gradient(#6382bf 0 1px, #fff 1px 2px) center / 8px 5px no-repeat, linear-gradient(90deg, #c8ddf2, #fff 30%, #b8cfe5); }
.big .long { width: 434px; }
.big .corner { width: 16px; border-left: 1px solid #7a8a99; }
.status { height: 19px; flex: none; border: 1px solid #a3a3a3; border-left: 0; box-shadow: inset 0 1px 0 #fff; }
```
